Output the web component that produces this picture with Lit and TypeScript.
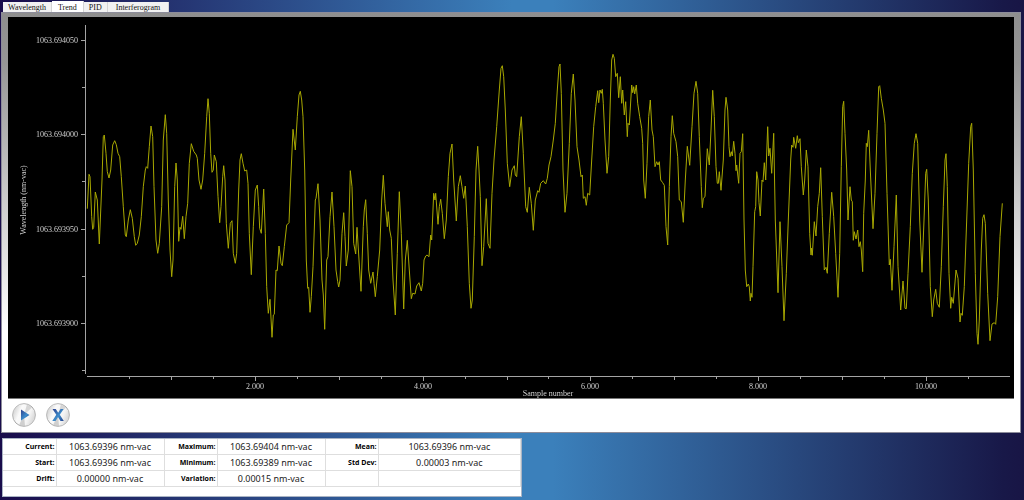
import { LitElement, html, svg, css } from "lit";
import { customElement, state } from "lit/decorators.js";

/** Trace vertices at three sub-steps per plot unit, grouped by starting offset. */
const TRACE_BLOCKS: { offset: number; points: string }[] = [
  {
    offset: 216,
    points:
      "22,566 27,463 30,470 35,590 38,628 41,622 46,516 52,540 58,672 66,480 70,350 73,345 78,400 82,455 87,474 92,450 98,375 104,362 109,374 114,400 119,410 124,470 130,560 136,645 139,650 145,600 151,569 157,595 163,650 167,676 172,670 178,645 184,590 190,500 196,450 199,440 203,445 208,380 213,318 218,350 222,500 228,660 233,700 238,670 245,560 250,360 256,284 260,340 265,540 270,690 275,770 279,720 284,500 288,429 292,480 296,664 300,622 303,628 308,589 313,656 318,590 323,550 328,430 334,371 341,394 349,405 352,415 357,480 363,508 368,480 374,400 380,290 384,236 388,280 392,400 396,457 400,450 403,405 409,425 414,530 419,608 423,560 428,470 431,437 435,480 439,610 445,685 451,610 456,602 460,700 466,730 470,700 476,510 480,420 484,401 489,430 494,453 500,450 504,490 508,640 514,764 520,620 526,510 532,495 536,560 539,625 544,640 551,507 556,640 560,800 565,880 570,838 576,952 580,885 583,883 588,750 592,752 597,678 603,730 607,737 613,680 620,615 627,608 632,480 639,328 646,390 652,290 657,225 661,214 665,240 669,290 674,450 679,720 683,805 686,802 690,877 694,830",
  },
  {
    offset: 906,
    points:
      "9,740 16,540 18,535 24,491 30,600 36,780 40,825 44,928 50,720 54,710 60,590 66,516 72,620 78,750 83,785 86,801 90,780 96,640 101,578 105,650 109,738 115,690 121,452 126,500 131,670 137,702 141,622 147,720 153,814 160,620 163,570 167,539 172,640 176,750 182,790 189,756 192,790 196,830 202,770 209,690 215,540 220,466 225,550 232,620 235,575 239,630 244,655 249,780 256,885 262,700 268,515 274,640 281,867 286,720 292,661 298,750 304,836 308,820 315,822 320,798 327,788 334,813 338,790 342,720 347,708 351,705 357,710 362,645 365,660 371,520 375,540 377,520 384,613 388,560 392,538 397,580 403,656 409,600 415,470 420,400 426,372 431,480 439,603 445,500 451,467 456,500 461,535 466,498 472,620 478,790 483,865 487,840 493,650 498,450 503,379 507,450 511,530 516,737 521,680 529,536 534,670 540,685 546,520 552,420 560,320 568,210 573,145 577,137 581,170 586,270 592,430 599,500 606,450 613,437 616,465 620,470 628,350 634,290 640,400 647,560 652,577 658,502 664,550 670,631 676,540 683,512 687,517 692,490 700,482 707,492 712,475 717,435",
  },
  {
    offset: 1596,
    points:
      "33,410 40,360 46,310 52,210 57,140 60,132 64,220 69,450 75,577 81,520 88,370 94,220 100,162 105,240 111,380 117,420 123,470 127,465 130,535 135,530 139,556 143,520 149,525 155,420 161,320 167,260 173,212 176,248 180,210 184,220 187,208 190,250 195,360 201,460 206,410 211,240 215,120 219,103 223,115 227,170 232,160 236,233 241,170 245,250 248,210 253,285 257,245 262,350 264,310 268,315 275,195 278,218 281,200 284,222 289,195 293,250 299,290 305,325 308,370 311,480 316,535 321,430 326,290 331,240 336,330 340,350 345,440 350,425 354,435 358,425 362,480 368,488 373,496 378,620 383,675 388,500 393,350 397,287 401,340 408,365 413,410 418,540 424,545 430,607 436,480 442,379 449,436 456,320 462,220 468,184 473,220 478,350 484,500 487,563 490,535 495,530 502,386 508,435 513,330 518,211 523,290 528,440 532,490 535,490 538,455 543,511 550,420 555,270 558,232 563,270 567,380 570,410 574,395 577,408 581,364 585,400 588,452 590,435 596,490 600,400 604,395 608,341 612,600 616,750 620,800 625,792 628,800 631,843 633,820 636,832 639,740 644,575 647,560 650,455 654,480 657,548 661,588 666,480 669,485 673,428 677,480 683,320 686,408 690,385 695,460",
  },
  {
    offset: 2286,
    points:
      "11,340 16,600 24,818 30,605 36,740 42,902 49,760 55,600 62,420 65,375 69,382 71,352 77,385 82,347 85,368 90,356 94,440 100,525 104,480 109,390 114,440 119,640 123,705 124,684 127,706 133,605 138,648 143,560 148,520 152,443 157,590 163,750 168,742 172,760 178,640 185,517 191,590 197,700 204,832 209,700 214,440 218,260 221,244 225,340 230,450 234,600 240,500 244,540 247,545 250,661 253,635 258,657 263,630 267,680 271,665 274,690 278,755 281,580 286,480 289,370 292,380 296,331 301,450 309,626 315,520 321,340 326,200 329,197 334,235 340,270 345,310 351,520 358,735 361,718 366,811 372,680 379,525 384,740 392,870 399,783 405,865 409,866 414,760 421,620 427,460 433,370 438,341 443,370 449,600 456,757 462,600 467,460 470,448 475,540 481,800 487,890 491,840 497,808 502,850 508,862 514,740 520,560 525,420 528,401 532,500 537,760 542,865 545,832 550,850 558,750 564,775 570,906 573,880 577,886 583,800 590,600 596,430 602,320 605,310 610,450 616,760 621,940 624,973 628,900 634,690 638,595 642,584 646,610 653,820 660,962 666,912 673,908 677,913 683,830 690,650 697,550",
  },
];

const TRACE_PATH =
  "M" +
  TRACE_BLOCKS.flatMap((block) =>
    block.points.split(" ").map((pair) => {
      const [x, y] = pair.split(",").map(Number);
      return `${((x + block.offset) / 3).toFixed(1)} ${(y / 3 + 3).toFixed(1)}`;
    })
  ).join("L");

const Y_TICKS = [
  { y: 23, label: "1063.694050" },
  { y: 70 },
  { y: 117, label: "1063.694000" },
  { y: 164 },
  { y: 212, label: "1063.693950" },
  { y: 259 },
  { y: 306, label: "1063.693900" },
  { y: 353 },
];

const X_LABELS = ["2.000", "4.000", "6.000", "8.000", "10.000"];

@customElement("trend-chart")
export class TrendChart extends LitElement {
  static styles = css`
    :host {
      display: block;
      background: #000;
      border-bottom: 1px solid #777;
    }
    .plot {
      display: block;
      width: 100%;
      height: auto;
      will-change: transform;
    }
    .axis {
      stroke: #a4a4a4;
      stroke-width: 1;
      fill: none;
    }
    .trace {
      stroke: #a8a800;
      stroke-width: 1;
      stroke-linejoin: round;
      fill: none;
    }
    .label {
      fill: #d0d0d0;
      font: 8px "Liberation Serif", serif;
    }
    .end {
      text-anchor: end;
    }
    .middle {
      text-anchor: middle;
    }
  `;

  render() {
    const xTicks = Array.from({ length: 21 }, (_, i) => i + 1);
    return html`
      <svg class="plot" viewBox="0 0 1006 381" role="img" aria-label="Wavelength trend">
        <path class="axis" d="M77.5 8V357M79 359.5H1002" />
        ${Y_TICKS.map(
          (t) => svg`
            <path class="axis" d="M${t.label ? 73 : 74} ${t.y + 0.5}H77" />
            ${t.label
              ? svg`<text class="label end" x="70" y=${t.y + 3}>${t.label}</text>`
              : ""}`
        )}
        ${xTicks.map((i) => {
          const x = Math.round(79 + i * 41.95) + 0.5;
          const length = i % 4 === 0 ? 4 : i % 2 === 0 ? 3 : 2;
          return svg`<path class="axis" d="M${x} 360v${length}" />`;
        })}
        ${X_LABELS.map(
          (label, i) => svg`
            <text class="label middle" x=${Math.round(79 + (i + 1) * 167.8)} y="372">${label}</text>`
        )}
        <text class="label middle" x="540" y="379">Sample number</text>
        <text class="label middle" transform="translate(18 183) rotate(-90)">Wavelength (nm-vac)</text>
        <path class="trace" d=${TRACE_PATH} />
      </svg>
    `;
  }
}

const TABS = ["Wavelength", "Trend", "PID", "Interferogram"];

const STATS = [
  [["Current:", "1063.69396 nm-vac"], ["Maximum:", "1063.69404 nm-vac"], ["Mean:", "1063.69396 nm-vac"]],
  [["Start:", "1063.69396 nm-vac"], ["Minimum:", "1063.69389 nm-vac"], ["Std Dev:", "0.00003 nm-vac"]],
  [["Drift:", "0.00000 nm-vac"], ["Variation:", "0.00015 nm-vac"], ["", ""]],
];

@customElement("app-root")
export class AppRoot extends LitElement {
  @state() private active = "Trend";

  static styles = css`
    :host {
      display: block;
      box-sizing: border-box;
      min-height: 100vh;
      padding: 1px 3px 3px 1px;
      background: linear-gradient(90deg, #190c4b 0%, #3b80bb 50%, #3b80bb 54%, #181848 98%, #181545 100%);
    }
    .tabs {
      display: flex;
      align-items: flex-end;
      padding-left: 2px;
    }
    .tab {
      box-sizing: border-box;
      height: 10px;
      padding: 1px 5px 0;
      border: 0;
      border-right: 1px solid #d4d4d4;
      background: #f1f1f1;
      color: #111;
      font: 8px/9px "Liberation Serif", serif;
    }
    .tab.active {
      height: 11px;
      padding: 1px 6px 0;
      background: #fff;
    }
    .tab:last-child {
      padding: 1px 8px 0;
    }
    .panel {
      padding: 4px 6px;
      border: 1px solid #8c8c9a;
      background: linear-gradient(#8e8e8e 0%, #969696 12%, #fff 76%);
    }
    .tools {
      display: flex;
      gap: 10px;
      padding: 4px 4px 1px;
    }
    .tool {
      width: 24px;
      height: 24px;
      padding: 0;
      border: 0;
      border-radius: 50%;
      background: none;
    }
    .icon {
      display: block;
      width: 24px;
      height: 24px;
    }
    .stats {
      width: 51%;
      box-sizing: border-box;
      margin-top: 5px;
      margin-left: 1px;
      padding-bottom: 9px;
      border: 1px solid #aab4c4;
      background: #fff;
    }
    .table {
      width: 100%;
      border-collapse: collapse;
      table-layout: fixed;
    }
    .name,
    .value {
      height: 15px;
      padding: 0;
      border-right: 1px solid #dedede;
      border-bottom: 1px solid #dedede;
    }
    .name {
      padding-right: 1px;
      color: #000;
      font: bold 7px/15px "Open Sans", sans-serif;
      text-align: right;
    }
    .value {
      color: #222;
      font: 9px/15px "Noto Sans", sans-serif;
      text-align: center;
    }
    .col-name {
      width: 53px;
    }
    .col-value {
      width: 108px;
    }
  `;

  private disc(id: string, glyph: unknown) {
    return html`
      <svg class="icon" viewBox="0 0 24 24" aria-hidden="true">
        <defs>
          <linearGradient id="${id}-rim" x1="0" y1="0" x2="1" y2="1">
            <stop offset="0" stop-color="#c9c9c9" />
            <stop offset="0.5" stop-color="#a6a6a6" />
            <stop offset="1" stop-color="#c4c4c4" />
          </linearGradient>
          <linearGradient id="${id}-face" x1="0" y1="0.3" x2="1" y2="0.7">
            <stop offset="0" stop-color="#cfcfcf" />
            <stop offset="0.3" stop-color="#fafafa" />
            <stop offset="0.7" stop-color="#f4f4f4" />
            <stop offset="1" stop-color="#d0d0d0" />
          </linearGradient>
          <linearGradient id="${id}-ink" x1="0" y1="0" x2="1" y2="1">
            <stop offset="0" stop-color="#2d3f8e" />
            <stop offset="0.55" stop-color="#3d8ccb" />
            <stop offset="1" stop-color="#28458f" />
          </linearGradient>
        </defs>
        <circle cx="12" cy="12" r="11.4" fill="url(#${id}-face)" stroke="url(#${id}-rim)" />
        <path d="M12 12L15 1.2A11 11 0 0 1 20 4.5Z" fill="#c4c4c4" opacity="0.65" />
        <path d="M12 12L7 22A11 11 0 0 0 13 23Z" fill="#b5b5b5" opacity="0.6" />
        ${glyph}
      </svg>
    `;
  }

  render() {
    return html`
      <div class="tabs" role="tablist">
        ${TABS.map(
          (tab) => html`
            <button
              class="tab ${tab === this.active ? "active" : ""}"
              role="tab"
              aria-selected=${tab === this.active}
              @click=${() => (this.active = tab)}
            >${tab}</button>`
        )}
      </div>
      <main class="panel">
        <trend-chart></trend-chart>
        <div class="tools">
          <button class="tool" aria-label="Start">
            ${this.disc("play", svg`<path d="M9 6.5L17.5 12L9 17.5Z" fill="url(#play-ink)" />`)}
          </button>
          <button class="tool" aria-label="Clear">
            ${this.disc(
              "clear",
              svg`<path d="M6.5 6H9.8L12.2 9.8L14.6 6H17.6L13.8 11.8L17.8 18H14.5L12 14L9.5 18H6.3L10.3 11.8Z" fill="url(#clear-ink)" />`
            )}
          </button>
        </div>
      </main>
      <section class="stats">
        <table class="table">
          <colgroup>
            <col class="col-name" /><col class="col-value" />
            <col class="col-name" /><col class="col-value" />
            <col class="col-name" /><col />
          </colgroup>
          <tbody>
            ${STATS.map(
              (row) => html`<tr>
                ${row.map(([name, value]) =>
                  name
                    ? html`<th class="name" scope="row">${name}</th><td class="value">${value}</td>`
                    : html`<td class="name"></td><td class="value"></td>`
                )}
              </tr>`
            )}
          </tbody>
        </table>
      </section>
    `;
  }
}
